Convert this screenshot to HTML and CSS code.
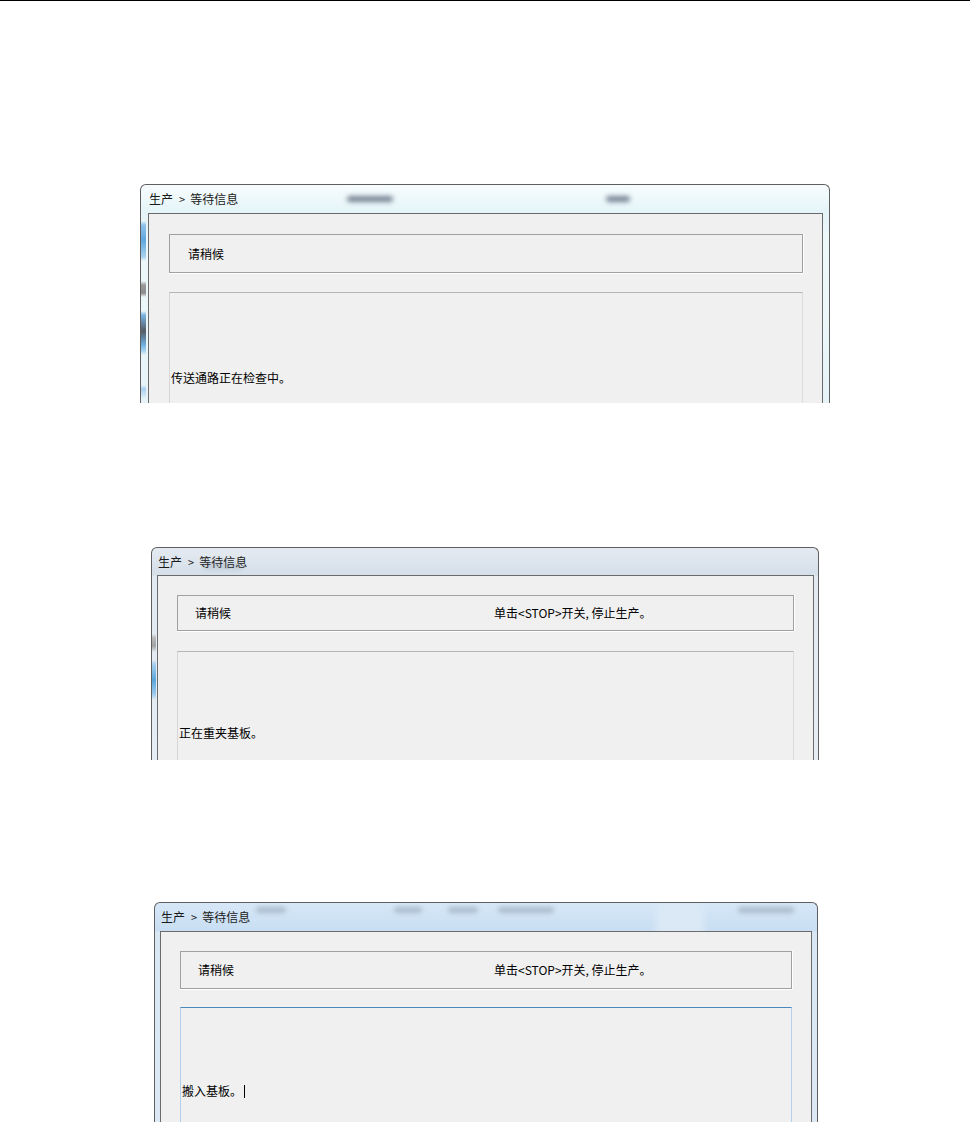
FILE: index.html
```html
<!DOCTYPE html>
<html>
<head>
    <meta charset="utf-8">
    <title>生产 &gt; 等待信息</title>
    <meta name="viewport" content="width=device-width, initial-scale=1.0">
    <link rel="stylesheet" href="styles.css">
</head>

<body>
    <div class="page">

        <!-- 截图 1：传送通路检查 -->
        <div class="shot shot-one">
            <div class="titlebar">
                <span class="title">生产<span class="sep">&gt;</span>等待信息</span>
                <span class="smudge" style="margin-left: 109px; width: 46px;"></span>
                <span class="smudge" style="margin-left: 213px; width: 24px;"></span>
            </div>
            <div class="client">
                <div class="msgbar"><span class="wait">请稍候</span></div>
                <div class="log">传送通路正在检查中。</div>
            </div>
        </div>

        <!-- 截图 2：重夹基板 -->
        <div class="shot shot-two">
            <div class="titlebar">
                <span class="title">生产<span class="sep">&gt;</span>等待信息</span>
                <span class="smudge smudge-low" style="margin-left: -44px; width: 40px;"></span>
            </div>
            <div class="client">
                <div class="msgbar">
                    <span class="wait">请稍候</span>
                    <span class="hint">单击&lt;STOP&gt;开关, 停止生产。</span>
                </div>
                <div class="log">正在重夹基板。</div>
            </div>
        </div>

        <!-- 截图 3：搬入基板 -->
        <div class="shot shot-three">
            <div class="titlebar">
                <span class="title">生产<span class="sep">&gt;</span>等待信息</span>
                <span class="smudge smudge-top" style="margin-left: 6px; width: 30px;"></span>
                <span class="smudge smudge-top" style="margin-left: 108px; width: 28px;"></span>
                <span class="smudge smudge-top" style="margin-left: 26px; width: 30px;"></span>
                <span class="smudge smudge-top" style="margin-left: 20px; width: 56px;"></span>
                <span class="smudge smudge-top" style="margin-left: 184px; width: 56px;"></span>
            </div>
            <div class="client">
                <div class="msgbar">
                    <span class="wait">请稍候</span>
                    <span class="hint">单击&lt;STOP&gt;开关, 停止生产。</span>
                </div>
                <div class="log log-focus">搬入基板。<span class="caret"></span></div>
            </div>
        </div>

    </div>
</body>
</html>
```

FILE: styles.css
```css
body {
    margin: 0;
    background: #ffffff;
    color: #000000;
    font-family: "Noto Sans CJK SC", "Noto Sans", sans-serif;
    font-size: 12px;
    line-height: 14px;
}

.page {
    display: flex;
    flex-direction: column;
    align-items: flex-start;
    height: 1121px;
    border-top: 1px solid #000000;
    overflow: hidden;
}

/* 窗口截图外框 */
.shot {
    box-sizing: border-box;
    display: flex;
    flex-direction: column;
    flex-shrink: 0;
    overflow: hidden;
    border: 1px solid #5f5f5f;
    border-bottom: none;
    border-radius: 6px 6px 0 0;
}

.shot-one {
    margin: 183px 0 0 140px;
    width: 690px;
    height: 219px;
    padding: 0 6px 0 7px;
    background:
        linear-gradient(to bottom,
            transparent 0, transparent 36px,
            #8fc3ea 40px, #5fa7de 55px, #a9d2ef 72px, transparent 76px,
            transparent 96px, #9a9a9a 100px, #8c8c8c 108px, transparent 112px,
            transparent 126px, #79b4e2 130px, #555c66 146px, #6fb0e0 160px, #a8d3f0 166px, transparent 170px,
            transparent 200px, #a8cfee 204px, transparent 214px) no-repeat left top / 5px 100%,
        linear-gradient(to bottom, #f7fcfd 0, #e4f4f8 28px, #eef8fa 60px, #e6f4f7 100%);
}

.shot-two {
    margin: 144px 0 0 151px;
    width: 668px;
    height: 213px;
    padding: 0 4px 0 5px;
    background:
        linear-gradient(to bottom,
            transparent 0, transparent 86px,
            #b9b9b9 90px, #a3a3a3 98px, transparent 104px,
            transparent 112px, #a9d0ee 116px, #5ba6dd 132px, #9ccbee 146px, transparent 152px) no-repeat left top / 4px 100%,
        linear-gradient(to bottom, #e4eaf1 0, #d5dfe9 27px, #e2e9f1 28px, #e6edf4 100%);
}

.shot-three {
    margin: 142px 0 0 154px;
    width: 664px;
    height: 220px;
    padding: 0 5px 0 5px;
    background:
        linear-gradient(to right, transparent 0, transparent 496px, #dbe9f7 506px, #dbe9f7 544px, transparent 554px),
        linear-gradient(to bottom, #d6e7f7 0, #c9def3 28px, #d9e7f4 29px, #dce9f5 100%);
}

.titlebar {
    display: flex;
    align-items: center;
    flex-shrink: 0;
    height: 28px;
    padding-left: 1px;
}

.shot-two .titlebar {
    height: 27px;
}

.title {
    white-space: nowrap;
    color: #1a1a1a;
}

.title .sep {
    margin: 0 5px 0 6px;
    font-size: 11px;
}

/* 标题栏玻璃后面的模糊内容 */
.smudge {
    flex-shrink: 0;
    height: 6px;
    background: #4f5d72;
    border-radius: 3px;
    filter: blur(2.5px);
    opacity: 0.75;
}

.smudge-low {
    align-self: flex-end;
    margin-bottom: 6px;
    opacity: 0.2;
}

.smudge-top {
    align-self: flex-start;
    margin-top: 4px;
    opacity: 0.3;
}

/* 客户区 */
.client {
    display: flex;
    flex-direction: column;
    flex: 1;
    background: #f0f0f0;
    border: 1px solid #6b6b6b;
    border-bottom: none;
}

.shot-one .client {
    padding: 20px 19px 0 20px;
    gap: 19px;
}

.shot-two .client {
    padding: 19px 19px 0 19px;
    gap: 20px;
}

.shot-three .client {
    padding: 19px 19px 0 19px;
    gap: 18px;
}

.msgbar {
    box-sizing: border-box;
    display: flex;
    align-items: center;
    flex-shrink: 0;
    border: 1px solid #a0a0a0;
    box-shadow: 0 1px 0 #ffffff, 1px 0 0 #ffffff;
}

.shot-one .msgbar {
    height: 39px;
    padding-left: 18px;
}

.shot-two .msgbar {
    height: 36px;
    padding-left: 17px;
}

.shot-three .msgbar {
    height: 38px;
    padding-left: 17px;
}

.wait {
    width: 299px;
    flex-shrink: 0;
    white-space: nowrap;
}

.shot-three .wait {
    width: 296px;
}

.hint {
    white-space: nowrap;
}

.log {
    flex: 1;
    padding-left: 1px;
    border: 1px solid #d6d6d6;
    border-top-color: #b6b6b6;
    border-right-color: #dcdcdc;
    border-bottom: none;
    white-space: nowrap;
}

.shot-one .log {
    padding-top: 78px;
}

.shot-two .log {
    padding-top: 74px;
}

.shot-three .log-focus {
    padding-top: 76px;
    border-color: #b3d0ea;
    border-top-color: #4a88bd;
}

.caret {
    display: inline-block;
    width: 1px;
    height: 13px;
    margin-left: 2px;
    vertical-align: -2px;
    background: #000000;
}
```
